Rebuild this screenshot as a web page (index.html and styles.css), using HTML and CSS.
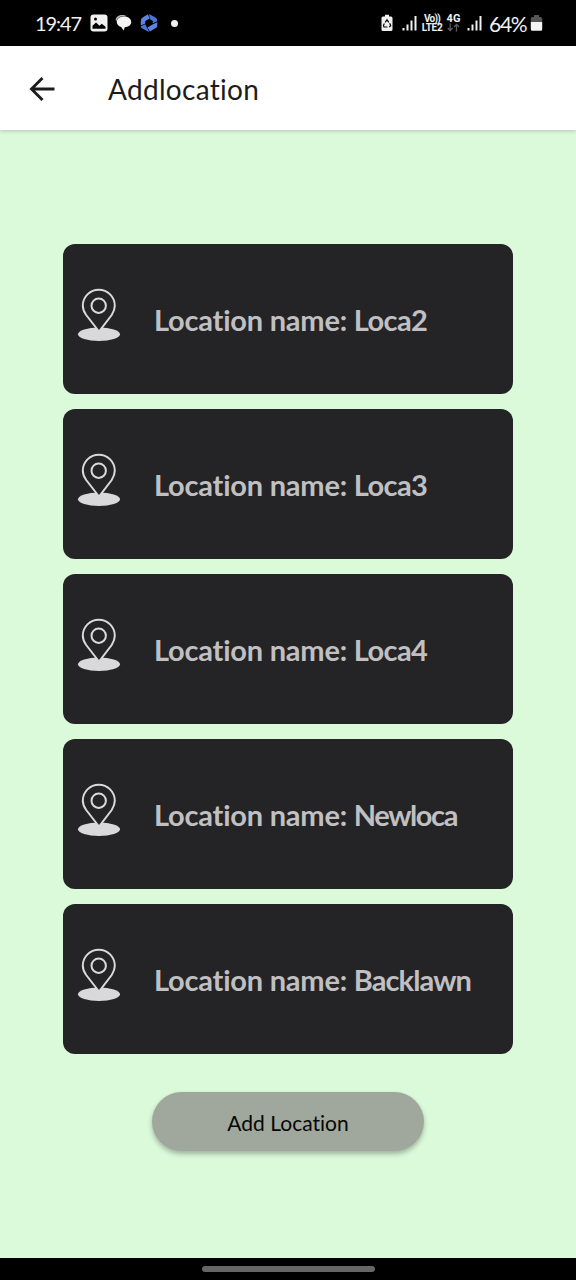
FILE: index.html
```html
<!DOCTYPE html>
<html lang="en">
<head>
<meta charset="utf-8">
<title>Addlocation</title>
<link rel="stylesheet" href="styles.css">
</head>
<body>
<svg class="defs" width="0" height="0" aria-hidden="true">
  <symbol id="pin" viewBox="0 0 44 56">
    <ellipse cx="22" cy="47.300" rx="21" ry="6.800" fill="#d9d9db"/>
    <path d="M22 44.500 9.200 28Q5.800 23 5.800 18.700a16 16 0 0 1 32 0Q37.800 23 34.700 28Z" fill="#242426" stroke="#d9d9db" stroke-width="2"/>
    <circle cx="21.700" cy="18.700" r="7.200" fill="none" stroke="#d9d9db" stroke-width="2"/>
  </symbol>
  <symbol id="signal" viewBox="0 0 16 18">
    <path d="M1.500 14v2.500M5.500 10.500v6M9.500 6.500v10M13.500 2v14.500" stroke="#f0f0f0" stroke-width="2" fill="none"/>
  </symbol>
</svg>
<header class="status">
  <span class="clock">19:47</span>
  <svg class="photo" width="18" height="18" viewBox="0 0 18 18"><rect x=".5" y=".5" width="17" height="17" rx="3" fill="#f0f0f0"/><path d="M2.500 14.800v-3L6 8.500l3.500 3.300 2.300-2 3.700 2.900v2.100Z"/><circle cx="5.500" cy="5" r="1.500"/></svg>
  <svg class="chat" width="17" height="18" viewBox="0 0 17 18"><path d="M.6 6C1 2.500 4 1 7 1c3 0 4 .7 5 1.500C6 1.500 2 3.500 1.500 7.500Z" fill="#b5b5b5"/><path d="M9 2.500c4 0 7.200 2.100 7.200 5.400 0 3.100-2.800 5-6.400 5.300L8.500 16.500l-2.300-3.600C3.500 12.200 1.800 10.300 1.800 8 1.800 4.700 5 2.500 9 2.500Z" fill="#f4f4f4"/></svg>
  <svg class="hex" width="18" height="20" viewBox="0 0 18 20"><path d="M8 1.300 3 4.200Q.8 5.500.8 8v4.500l4.500-2V8L9.500 5.500Z" fill="#5d84de"/><path d="M9.100.9 15.500 4.500Q17.300 5.600 17.300 8.300l-4.500 2V8L9.800 6Z" fill="#4d74d0"/><path d="M17.300 9.300v3.200q0 1.700-1.500 2.600L10 18.500 7.500 14.500l5-3Z" fill="#5d84de"/><path d="M.8 13.200 5.200 11.200 9.300 18.700H8.500L2.300 15.600Q.8 14.800.8 13.200Z" fill="#4d74d0"/></svg>
  <span class="dot"></span>
  <span class="grow"></span>
  <svg class="recycle" width="12" height="18" viewBox="0 0 12 18"><path d="M4 .8h4v1.700h2A1.500 1.500 0 0 1 11.500 4v11.500A1.500 1.500 0 0 1 10 17H2a1.500 1.500 0 0 1-1.500-1.500V4A1.500 1.500 0 0 1 2 2.500h2Z" fill="#f0f0f0"/><path d="m4.200 8.300 1.800-2.500 1.800 2.500M8.700 9.300l1 2.500-1.500 1.100M6.500 13H3l-.6-1.400 1-2" fill="none" stroke="#000" stroke-width="1.200"/></svg>
  <svg class="bars" width="16" height="18"><use href="#signal"/></svg>
  <span class="net volte"><span class="vo">Vo))</span><span>LTE2</span></span>
  <span class="net data"><span>4G</span><svg width="13" height="9" viewBox="0 0 13 9"><path d="M3.200 .5v7M.8 5l2.400 2.600L5.600 5M9.500 8.500v-7M7 4l2.500-2.600L12 4" fill="none" stroke="#5c5c5c" stroke-width="1.300"/></svg></span>
  <svg class="bars second" width="16" height="18"><use href="#signal"/></svg>
  <span class="percent">64%</span>
  <svg class="battery" width="13" height="18" viewBox="0 0 13 18"><path d="M4 1h5v2h1.500A1.700 1.700 0 0 1 12.200 5v3H.8V5a1.700 1.700 0 0 1 1.700-2H4Z" fill="#555"/><path d="M.8 8h11.400v7.300a1.500 1.500 0 0 1-1.500 1.500H2.300a1.500 1.500 0 0 1-1.500-1.500Z" fill="#f4f4f4"/></svg>
</header>
<nav class="appbar">
  <svg class="back" width="28" height="28" viewBox="0 0 28 28"><path d="M26.500 14H4M14.500 3 3.500 14l11 11" fill="none" stroke="#1c1c1c" stroke-width="2.900"/></svg>
  <h1 class="title">Addlocation</h1>
</nav>
<main class="content">
  <ul class="list">
    <li class="card"><svg class="pin" width="44" height="56"><use href="#pin"/></svg><span class="name">Location name: <span class="value">Loca2</span></span></li>
    <li class="card"><svg class="pin" width="44" height="56"><use href="#pin"/></svg><span class="name">Location name: <span class="value">Loca3</span></span></li>
    <li class="card"><svg class="pin" width="44" height="56"><use href="#pin"/></svg><span class="name">Location name: <span class="value">Loca4</span></span></li>
    <li class="card"><svg class="pin" width="44" height="56"><use href="#pin"/></svg><span class="name">Location name: <span class="value newloca">Newloca</span></span></li>
    <li class="card"><svg class="pin" width="44" height="56"><use href="#pin"/></svg><span class="name">Location name: <span class="value backlawn">Backlawn</span></span></li>
  </ul>
  <button class="add">Add Location</button>
</main>
<footer class="gesture"><span class="handle"></span></footer>
</body>
</html>
```
FILE: styles.css
```css
* { box-sizing: border-box; }
body {
  margin: 0;
  width: 576px;
  height: 1280px;
  display: flex;
  flex-direction: column;
  overflow: hidden;
  background: #dbfada;
  font-family: Lato, "Open Sans", sans-serif;
  font-variant-ligatures: none;
}
.defs { display: none; }
svg { flex: none; }
.status {
  height: 46px;
  flex: none;
  display: flex;
  align-items: center;
  padding: 0 33px 0 35px;
  background: #000;
  color: #f0f0f0;
  white-space: nowrap;
}
.clock { width: 55px; font-size: 20px; letter-spacing: -1.1px; }
.chat { margin-left: 7px; }
.hex { margin-left: 8px; }
.dot { width: 7px; height: 7px; margin-left: 13px; border-radius: 50%; background: #f0f0f0; }
.grow { flex: 1; }
.bars { margin-left: 9px; }
.net {
  display: flex;
  flex-direction: column;
  align-items: center;
  font: bold 11px/9px Roboto, sans-serif;
}
.volte { width: 22px; margin-left: 3px; font-size: 10px; letter-spacing: -0.3px; }
.vo { letter-spacing: -0.8px; }
.data { width: 15px; margin-left: 3px; }
.second { margin-left: 6px; }
.percent { width: 38px; margin-left: 6px; font-size: 21px; letter-spacing: -1.3px; }
.battery { margin-left: 3px; }
.appbar {
  height: 84px;
  flex: none;
  display: flex;
  align-items: center;
  padding: 1px 0 0 28px;
  background: #fff;
  box-shadow: 0 1px 4px rgba(0, 0, 0, 0.2);
}
.title { margin: 1px 0 0 52px; font-size: 28px; font-weight: 400; color: #1c1c1c; letter-spacing: 0.3px; }
.content {
  flex: 1;
  display: flex;
  flex-direction: column;
  align-items: center;
  padding-top: 114px;
}
.list { margin: 0; padding: 0; list-style: none; display: flex; flex-direction: column; gap: 15px; }
.card {
  width: 450px;
  height: 150px;
  display: flex;
  align-items: center;
  padding: 0 0 8px 14px;
  border-radius: 12px;
  background: #242426;
}
.name { margin: 9px 0 0 33px; font-size: 29px; font-weight: 700; letter-spacing: -0.22px; color: #c0c0c3; white-space: nowrap; }
.value { letter-spacing: -0.6px; }
.newloca { letter-spacing: -1.4px; }
.backlawn { letter-spacing: -0.9px; }
.add {
  width: 272px;
  height: 59px;
  margin-top: 38px;
  padding: 1px 0 0;
  border: 0;
  border-radius: 30px;
  background: #a0a89d;
  box-shadow: 0 3px 5px rgba(0, 0, 0, 0.28);
  font: 21px Lato, "Open Sans", sans-serif;
  font-variant-ligatures: none;
  color: #050705;
}
.gesture {
  height: 22px;
  flex: none;
  display: flex;
  justify-content: center;
  padding-top: 8px;
  background: #000;
}
.handle { width: 173px; height: 6px; border-radius: 3px; background: #666; }
```
